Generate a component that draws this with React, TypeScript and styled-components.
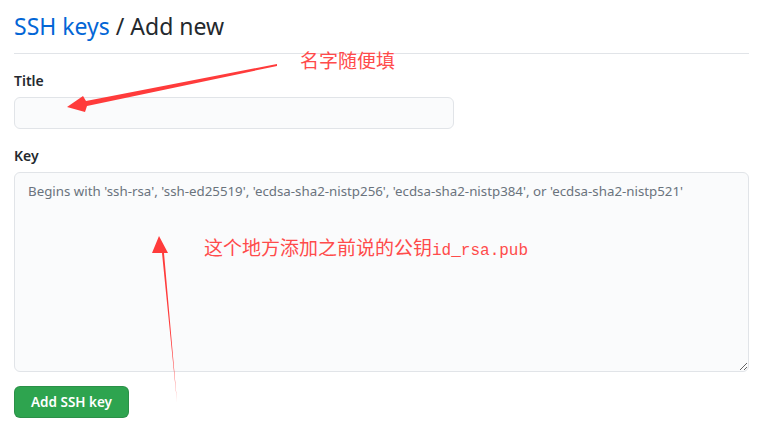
import React from "react";
import styled, { createGlobalStyle } from "styled-components";

const Global = createGlobalStyle`
  html, body { margin: 0; padding: 0; background: #ffffff; }
  body { font-family: "Noto Sans", "Open Sans", sans-serif; color: #24292e; }
  * { box-sizing: border-box; }
`;

const Page = styled.div`
  position: relative;
  width: 768px;
  height: 448px;
  padding: 9px 19px 0 14px;
  overflow: hidden;
`;

const Header = styled.div`
  border-bottom: 1px solid #e1e4e8;
  padding-bottom: 9px;
`;

const Heading = styled.h2`
  margin: 0;
  font-size: 23px;
  font-weight: 400;
  line-height: 35px;
  color: #24292e;
`;

const Crumb = styled.a`
  color: #0366d6;
  text-decoration: none;
`;

const Form = styled.form`
  display: flex;
  flex-direction: column;
  padding-top: 17px;
`;

const Group = styled.div<{ $gap?: number }>`
  display: flex;
  flex-direction: column;
  margin-bottom: ${(p) => p.$gap ?? 15}px;
`;

const Label = styled.label`
  font-size: 14px;
  font-weight: 600;
  line-height: 20px;
  margin-bottom: 6px;
  color: #24292e;
`;

const Input = styled.input`
  width: 440px;
  height: 32px;
  border: 1px solid #e1e4e8;
  border-radius: 6px;
  background: #fafbfc;
  font-size: 14px;
  padding: 5px 12px;
  outline: none;
`;

const TextArea = styled.textarea`
  width: 735px;
  height: 200px;
  border: 1px solid #e1e4e8;
  border-radius: 6px;
  background: #fafbfc;
  font-family: "Noto Sans", "Open Sans", sans-serif;
  font-size: 13.3px;
  line-height: 20px;
  padding: 8px 13px;
  resize: vertical;
  outline: none;
  &::placeholder { color: #6a737d; }
`;

const Button = styled.button`
  align-self: flex-start;
  width: 115px;
  height: 32px;
  border: 1px solid rgba(27, 31, 35, 0.15);
  border-radius: 6px;
  background: #2ea44f;
  color: #ffffff;
  font-family: "Noto Sans", "Open Sans", sans-serif;
  font-size: 13.5px;
  font-weight: 600;
  padding: 0;
`;

const Note = styled.div<{ $x: number; $y: number }>`
  position: absolute;
  left: ${(p) => p.$x}px;
  top: ${(p) => p.$y}px;
  color: #ff4b4b;
  font-family: "Noto Sans CJK SC", sans-serif;
  font-size: 19px;
  line-height: 24px;
  white-space: nowrap;
`;

const Mono = styled.span`
  font-family: "Liberation Mono", monospace;
  font-size: 16px;
`;

const Overlay = styled.svg`
  position: absolute;
  left: 0;
  top: 0;
  pointer-events: none;
`;

export default function App() {
  return (
    <>
      <Global />
      <Page>
        <Header>
          <Heading>
            <Crumb href="#">SSH keys</Crumb> / Add new
          </Heading>
        </Header>
        <Form onSubmit={(e) => e.preventDefault()}>
          <Group $gap={17}>
            <Label>Title</Label>
            <Input type="text" />
          </Group>
          <Group $gap={14}>
            <Label>Key</Label>
            <TextArea placeholder="Begins with 'ssh-rsa', 'ssh-ed25519', 'ecdsa-sha2-nistp256', 'ecdsa-sha2-nistp384', or 'ecdsa-sha2-nistp521'" />
          </Group>
          <Button type="submit">Add SSH key</Button>
        </Form>
        <Note $x={300} $y={48}>名字随便填</Note>
        <Note $x={204} $y={235}>
          这个地方添加之前说的公钥<Mono>id_rsa.pub</Mono>
        </Note>
        <Overlay width={768} height={448} viewBox="0 0 768 448">
          <polygon points="277,64 86,101 83,96 67,107 85,112 87,106 277,66" fill="#ff3b3b" />
          <polygon points="159,236 168,253 164,253 177,402 162,253 152,253" fill="#ff3b3b" />
        </Overlay>
      </Page>
    </>
  );
}
